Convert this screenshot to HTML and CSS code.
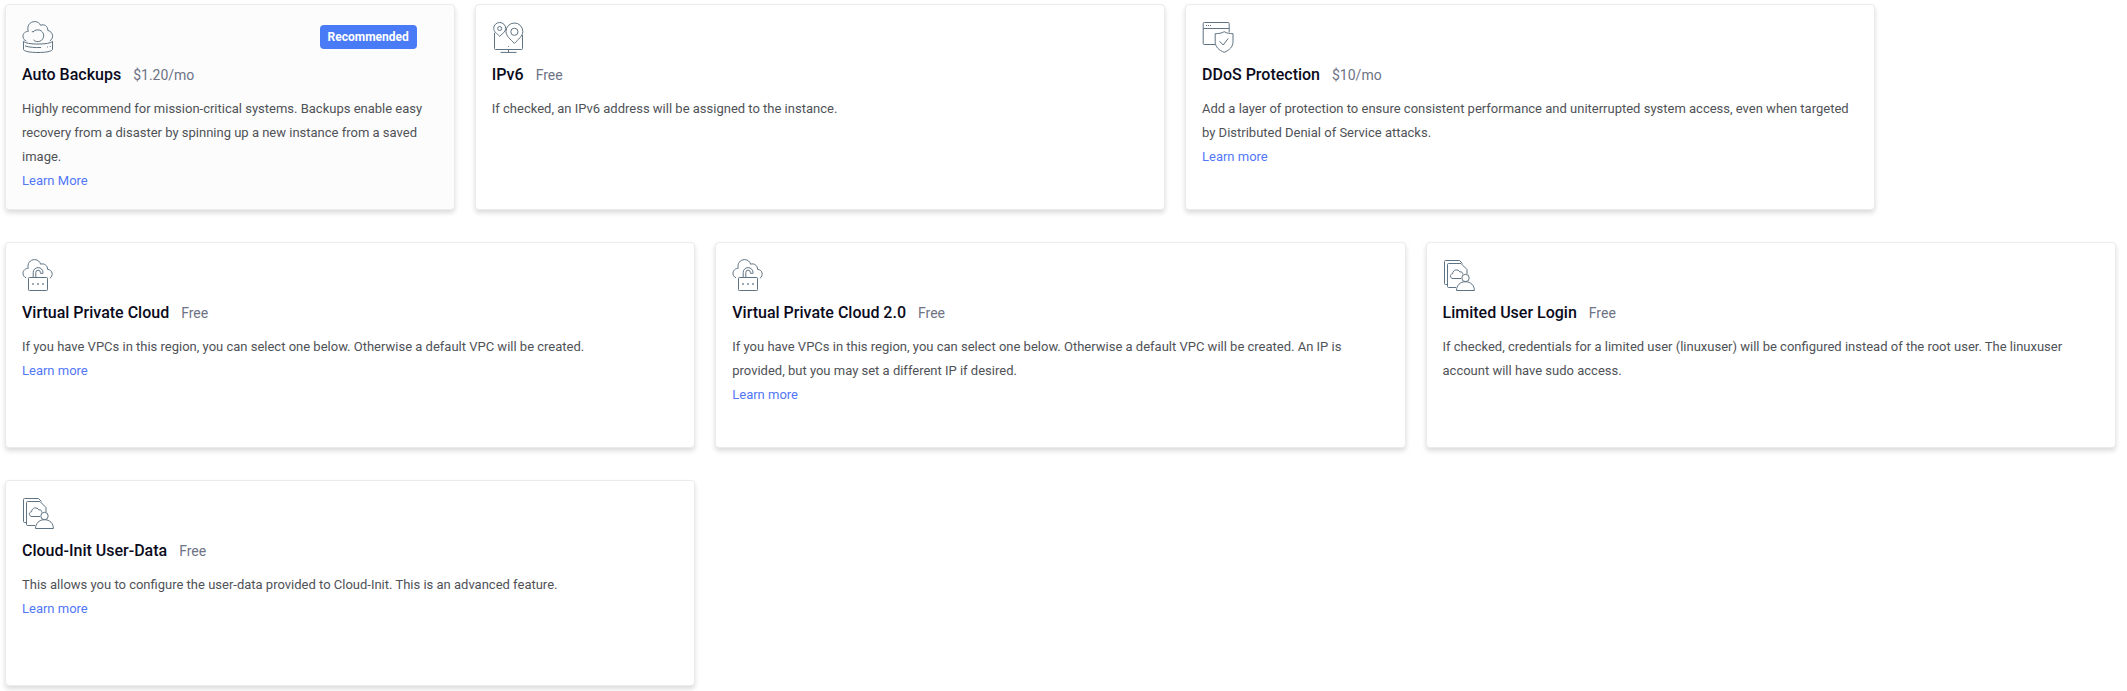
FILE: index.html
```html
<!DOCTYPE html>
<html lang="en">
<head>
<meta charset="utf-8">
<title>Additional Features</title>
<link rel="stylesheet" href="styles.css">
</head>
<body>
<svg class="sprite" aria-hidden="true">
  <symbol id="vpc" viewBox="0 0 32 32">
    <path d="M4 18.8C.7 17.4-.1 13 2.7 10.6 3.8 9.6 5.3 9.3 6.2 9.4 5 4.5 8.3.6 12.6.6c3.2 0 5.3 2 6 4.6 3.5-1.2 7 1.2 7 5.2 5.2.5 6 6.3 2.3 8.9"/>
    <path d="M11.2 18.5v-5a4.9 4.9 0 0 1 9.8 0v.8h-2.6v-.8a2.3 2.3 0 0 0-4.6 0v5"/>
    <rect x="6.5" y="18.5" width="19" height="13" rx=".8"/>
    <path class="dots" d="M10.2 25h1.6M15.2 25h1.6M20.2 25h1.6"/>
  </symbol>
  <symbol id="user" viewBox="-1 0 32 32">
    <path d="M3.5 25.5h-2a1 1 0 0 1-1-1v-22a1 1 0 0 1 1-1h14l3 3"/>
    <path d="M12 28.5H4.5a1 1 0 0 1-1-1v-22a1 1 0 0 1 1-1H17l6 6V15"/>
    <path d="M17 19.5H9c-3.3 0-3.5-4.4-.4-4.8.3-4.3 5.5-5 7.2-1.8 2.2-.5 3 1 2.9 2.5"/>
    <circle cx="21.5" cy="19" r="3.7"/>
    <path d="M12.5 31.5c0-5 3.6-8.8 9-8.8s8.9 3.8 8.9 8.8z"/>
  </symbol>
</svg>
<main class="features">
  <div class="row">
    <section class="card card-narrow">
      <span class="badge">Recommended</span>
      <svg class="icon" viewBox="0 0 32 32">
        <path d="M4.3 20C.5 18.8 0 13.7 2.6 11.6c1.2-1 2.5-1.3 3.7-1.2C4.4 5 8 .6 12.6.6c3 0 5 1.5 6 3.7 3.7-1.5 7.4.8 7.2 5.1C31.6 11 32 17.3 27.8 20"/>
        <path d="M9.8 10.8l2-.2M11 11c3.5-4.2 10.7-2 10.7 3.7 0 5.5-6.8 7.8-10.3 4.2"/>
        <path d="M1.5 20.3v8c0 4.3 29 4.3 29 0v-8c-2 3.7-27 3.7-29 0zM3 24.9c4 1.4 10 1.9 16 1.6M25 26h.9M27.8 25.5h.9"/>
      </svg>
      <h3 class="title">Auto Backups <span class="price">$1.20/mo</span></h3>
      <p class="text">Highly recommend for mission-critical systems. Backups enable easy recovery from a disaster by spinning up a new instance from a saved image.</p>
      <a class="link">Learn More</a>
    </section>
    <section class="card">
      <svg class="icon" viewBox="0 0 32 32">
        <path d="M7.7 15.3C4.7 12.5 1.7 10.6 1.7 7.5a6 6 0 0 1 12 0c0 3.1-3 5-6 7.8z"/>
        <circle cx="7.7" cy="7.5" r="2"/>
        <path d="M22.4 22.4c-4-4.3-8.4-7.2-8.4-12a8.4 8.4 0 0 1 16.8 0c0 4.8-4.4 7.7-8.4 12z"/>
        <circle cx="22.4" cy="10.8" r="3.6"/>
        <path d="M2.5 11.7v15.8a1 1 0 0 0 1 1h26a1 1 0 0 0 1-1V14M16.5 25v.8M16.5 28.5v3M8.5 31.4h16"/>
      </svg>
      <h3 class="title">IPv6 <span class="price">Free</span></h3>
      <p class="text">If checked, an IPv6 address will be assigned to the instance.</p>
    </section>
    <section class="card">
      <svg class="icon" viewBox="0 0 32 32">
        <path d="M13.2 23.5h-11a1 1 0 0 1-1-1v-20a1 1 0 0 1 1-1h24a1 1 0 0 1 1 1v8.8M1.2 7.5h26M4 4.5h1M6 4.5h1M8 4.5h1"/>
        <path d="M22.2 10.7c2.5 1.5 5.5 2 8.8 2v8c0 5-3.6 8.7-8.8 10.6-5.3-1.9-9-5.6-9-10.6v-8c3.3 0 6.5-.5 9-2z"/>
        <path d="M17.5 20.2l3.7 3.8 5-6.5"/>
      </svg>
      <h3 class="title">DDoS Protection <span class="price">$10/mo</span></h3>
      <p class="text">Add a layer of protection to ensure consistent performance and uniterrupted system access, even when targeted by Distributed Denial of Service attacks.</p>
      <a class="link">Learn more</a>
    </section>
  </div>
  <div class="row">
    <section class="card">
      <svg class="icon"><use href="#vpc"/></svg>
      <h3 class="title">Virtual Private Cloud <span class="price">Free</span></h3>
      <p class="text">If you have VPCs in this region, you can select one below. Otherwise a default VPC will be created.</p>
      <a class="link">Learn more</a>
    </section>
    <section class="card">
      <svg class="icon"><use href="#vpc"/></svg>
      <h3 class="title">Virtual Private Cloud 2.0 <span class="price">Free</span></h3>
      <p class="text">If you have VPCs in this region, you can select one below. Otherwise a default VPC will be created. An IP is provided, but you may set a different IP if desired.</p>
      <a class="link">Learn more</a>
    </section>
    <section class="card">
      <svg class="icon"><use href="#user"/></svg>
      <h3 class="title">Limited User Login <span class="price">Free</span></h3>
      <p class="text">If checked, credentials for a limited user (linuxuser) will be configured instead of the root user. The linuxuser account will have sudo access.</p>
    </section>
  </div>
  <div class="row">
    <section class="card">
      <svg class="icon"><use href="#user"/></svg>
      <h3 class="title">Cloud-Init User-Data <span class="price">Free</span></h3>
      <p class="text">This allows you to configure the user-data provided to Cloud-Init. This is an advanced feature.</p>
      <a class="link">Learn more</a>
    </section>
  </div>
</main>
</body>
</html>
```
FILE: styles.css
```css
* { box-sizing: border-box; }
body {
  margin: 0;
  background: #fff;
  font-family: Roboto, "Liberation Sans", sans-serif;
}
.sprite { display: none; }
.features {
  display: flex;
  flex-direction: column;
  gap: 32px;
  min-height: 100vh;
  padding: 4px 0 0 5px;
}
.row { display: flex; gap: 20px; }
.card {
  position: relative;
  flex: none;
  width: 690.25px;
  height: 206px;
  padding: 16px;
  border: 1px solid #ebebeb;
  border-radius: 4px;
  background: #fff;
  box-shadow: 0 3px 5px rgba(0, 0, 0, .14);
}
.card-narrow { width: 449.75px; background: #fcfcfc; }
.icon {
  display: block;
  width: 32px;
  height: 32px;
  overflow: visible;
  fill: none;
  stroke: #5f7382;
  stroke-width: 1;
  stroke-linejoin: round;
}
.dots { stroke-width: 1.6; }
.badge {
  position: absolute;
  top: 20px;
  right: 37px;
  padding: 0 8px;
  border-radius: 4px;
  background: #4a7bf7;
  color: #fff;
  font-size: 12px;
  font-weight: 700;
  line-height: 24px;
}
.title {
  margin: 10px 0;
  color: #0b0b1c;
  font-size: 16px;
  font-weight: 500;
  line-height: 24px;
}
.price {
  margin-left: 8px;
  color: #6d7385;
  font-size: 14px;
  font-weight: 400;
}
.text {
  margin: 0;
  color: #4f5257;
  font-size: 13px;
  line-height: 24px;
}
.link {
  display: block;
  color: #5277f7;
  font-size: 13px;
  line-height: 24px;
}
```
